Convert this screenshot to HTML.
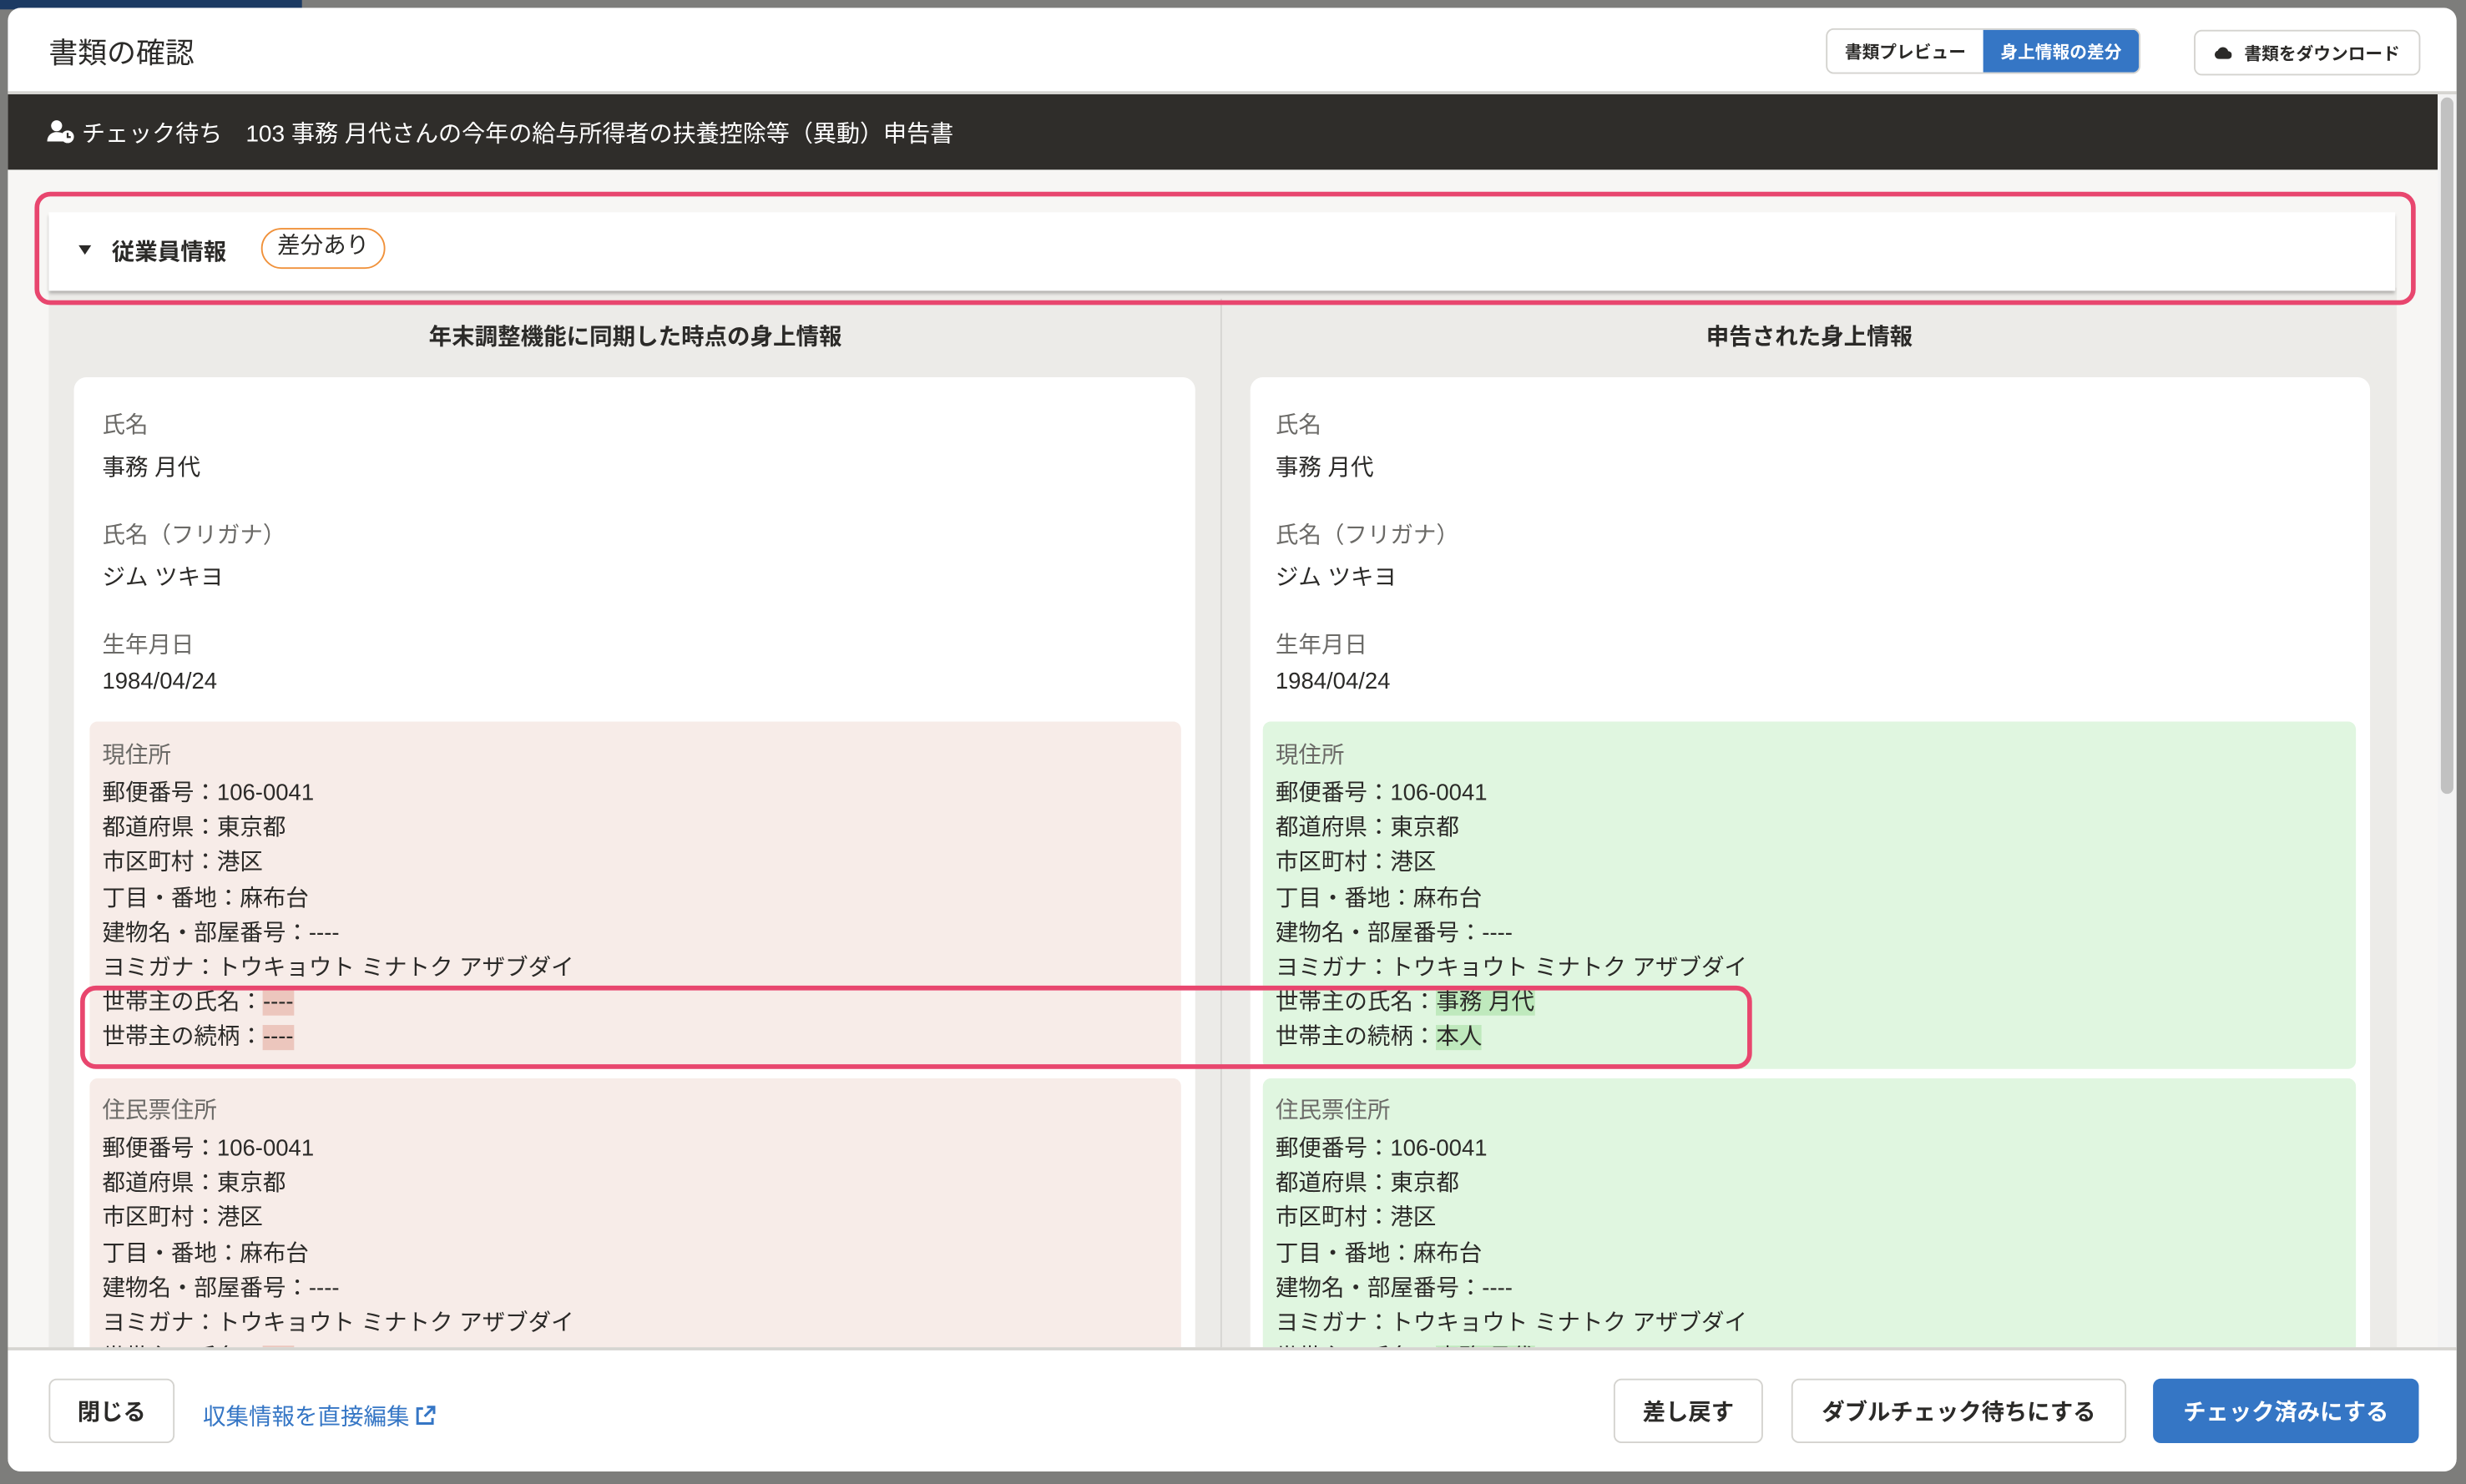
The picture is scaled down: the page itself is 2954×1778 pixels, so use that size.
<!DOCTYPE html>
<html><head><meta charset="utf-8">
<style>
*{box-sizing:border-box;margin:0;padding:0}
html,body{width:2954px;height:1778px;overflow:hidden;background:#7b7b7b}
body{font-family:"Liberation Sans","Noto Sans CJK JP",sans-serif;color:#2b2a28}
#s{position:absolute;left:0;top:0;width:1568px;height:944px;transform:scale(1.88393,1.88347);transform-origin:0 0;background:#7d7d7b;overflow:hidden}
.a{position:absolute}
.modal{left:5px;top:5px;width:1557px;height:931px;background:#fff;border-radius:8px;overflow:hidden}
.t{white-space:nowrap}
.lbl{color:#6b6a67;font-size:14.6px}
.val{font-size:14.6px;color:#2b2a28}
.btn{border:1.5px solid #d4d3cf;border-radius:5px;background:#fff;font-weight:bold;font-size:14.5px;display:flex;align-items:center;justify-content:center}
.line{position:absolute;font-size:14.6px;white-space:nowrap;line-height:22.2px}
.hp{background:#ecc6bd}
.hg{background:#bfe9bd}
</style></head><body>
<div id="s">
 <div class="a" style="left:0;top:0;width:192px;height:6px;background:#1c3a63"></div>
 <div class="modal a">
  <div class="a t" style="left:26px;top:15px;font-size:18.5px;">書類の確認</div>
  <div class="a" style="left:1156px;top:13px;width:200px;height:29px;border:1.5px solid #d4d3cf;border-radius:5px;overflow:hidden;display:flex">
    <div style="width:99px;display:flex;align-items:center;justify-content:center;font-size:11px;font-weight:bold">書類プレビュー</div>
    <div style="flex:1;background:#3576c5;color:#fff;display:flex;align-items:center;justify-content:center;font-size:11px;font-weight:bold">身上情報の差分</div>
  </div>
  <div class="a btn" style="left:1390px;top:14px;width:144px;height:29px;font-size:11px;"><svg width="11" height="9" viewBox="0 0 11 9" style="margin-right:8px"><path d="M3 8.5h5.5a2.5 2.5 0 0 0 .3-5A3.5 3.5 0 0 0 2.2 3.2 2.7 2.7 0 0 0 3 8.5z" fill="#2b2a28"/></svg>書類をダウンロード</div>
  <div class="a" style="left:0;top:53px;width:1557px;height:2px;background:#d6d5d1"></div>
  <div class="a" style="left:0;top:55px;width:1545px;height:48px;background:#2f2d2a"></div>
  <svg class="a" style="left:25px;top:71px" width="18" height="16" viewBox="0 0 18 16"><circle cx="6" cy="4" r="3.5" fill="#fff"/><path d="M0 14c0-4 3-6 6-6s5 1 6 3v3z" fill="#fff"/><circle cx="13" cy="11" r="4" fill="#fff"/><path d="M13 8.5v2.7h2" stroke="#2f2d2a" stroke-width="1.2" fill="none"/></svg>
  <div class="a t" style="left:47px;top:69px;color:#fff;font-size:14.9px">チェック待ち　103 事務 月代さんの今年の給与所得者の扶養控除等（異動）申告書</div>
  <div class="a" style="left:0;top:103px;width:1545px;height:750px;background:#f7f6f4"></div>
  <div class="a" style="left:1545px;top:55px;width:12px;height:798px;background:#f3f3f3"></div>
  <div class="a" style="left:1547px;top:57px;width:8px;height:443px;background:#c1c1c1;border-radius:4px"></div>
  <div class="a" style="left:26px;top:178px;width:1493px;height:680px;background:#ecebe8"></div>
  <div class="a" style="left:771px;top:185px;width:1px;height:670px;background:#d6d5d1"></div>
  <div class="a t" style="left:26px;top:198px;width:746px;text-align:center;font-weight:bold;font-size:14.6px">年末調整機能に同期した時点の身上情報</div>
  <div class="a t" style="left:772px;top:198px;width:747px;text-align:center;font-weight:bold;font-size:14.6px">申告された身上情報</div>
  <div class="a" style="left:26px;top:130px;width:1492px;height:50px;background:#fff;box-shadow:0 2px 2px rgba(0,0,0,.25)"></div>
  <div class="a" style="left:45px;top:151px;width:0;height:0;border-left:4px solid transparent;border-right:4px solid transparent;border-top:6px solid #2b2a28"></div>
  <div class="a t" style="left:66px;top:144px;font-weight:bold;font-size:14.6px">従業員情報</div>
  <div class="a t" style="left:161px;top:140px;width:79px;height:26px;border:1.5px solid #f0913a;border-radius:13px;font-size:14.6px;text-align:center;line-height:23px">差分あり</div>
  <div class="a" style="left:17px;top:117px;width:1514px;height:72px;border:3px solid #e8466e;border-radius:10px"></div>

  <div class="a" style="left:42px;top:235px;width:713px;height:700px;background:#fff;border-radius:8px"></div>
  <div class="a" style="left:790px;top:235px;width:712px;height:700px;background:#fff;border-radius:8px"></div>

  <div class="a" style="left:52px;top:454px;width:694px;height:221px;background:#f7ece8;border-radius:5px"></div>
  <div class="a" style="left:52px;top:681px;width:694px;height:200px;background:#f7ece8;border-radius:5px"></div>
  <div class="a" style="left:798px;top:454px;width:695px;height:221px;background:#e0f6e0;border-radius:5px"></div>
  <div class="a" style="left:798px;top:681px;width:695px;height:200px;background:#e0f6e0;border-radius:5px"></div>

  <div class="a lbl t" style="left:60px;top:254px">氏名</div>
  <div class="a val t" style="left:60px;top:281px">事務 月代</div>
  <div class="a lbl t" style="left:60px;top:324px">氏名（フリガナ）</div>
  <div class="a val t" style="left:60px;top:351px">ジム ツキヨ</div>
  <div class="a lbl t" style="left:60px;top:394px">生年月日</div>
  <div class="a val t" style="left:60px;top:421px">1984/04/24</div>
  <div class="a lbl t" style="left:60px;top:464px">現住所</div>
  <div class="line" style="left:60px;top:489px">郵便番号：106-0041<br>都道府県：東京都<br>市区町村：港区<br>丁目・番地：麻布台<br>建物名・部屋番号：----<br>ヨミガナ：トウキョウト ミナトク アザブダイ<br>世帯主の氏名：<span class="hp">----</span><br>世帯主の続柄：<span class="hp">----</span></div>
  <div class="a lbl t" style="left:60px;top:690px">住民票住所</div>
  <div class="line" style="left:60px;top:715px">郵便番号：106-0041<br>都道府県：東京都<br>市区町村：港区<br>丁目・番地：麻布台<br>建物名・部屋番号：----<br>ヨミガナ：トウキョウト ミナトク アザブダイ<br>世帯主の氏名：<span class="hp">----</span></div>

  <div class="a lbl t" style="left:806px;top:254px">氏名</div>
  <div class="a val t" style="left:806px;top:281px">事務 月代</div>
  <div class="a lbl t" style="left:806px;top:324px">氏名（フリガナ）</div>
  <div class="a val t" style="left:806px;top:351px">ジム ツキヨ</div>
  <div class="a lbl t" style="left:806px;top:394px">生年月日</div>
  <div class="a val t" style="left:806px;top:421px">1984/04/24</div>
  <div class="a lbl t" style="left:806px;top:464px">現住所</div>
  <div class="line" style="left:806px;top:489px">郵便番号：106-0041<br>都道府県：東京都<br>市区町村：港区<br>丁目・番地：麻布台<br>建物名・部屋番号：----<br>ヨミガナ：トウキョウト ミナトク アザブダイ<br>世帯主の氏名：<span class="hg">事務 月代</span><br>世帯主の続柄：<span class="hg">本人</span></div>
  <div class="a lbl t" style="left:806px;top:690px">住民票住所</div>
  <div class="line" style="left:806px;top:715px">郵便番号：106-0041<br>都道府県：東京都<br>市区町村：港区<br>丁目・番地：麻布台<br>建物名・部屋番号：----<br>ヨミガナ：トウキョウト ミナトク アザブダイ<br>世帯主の氏名：<span class="hg">事務 月代</span></div>

  <div class="a" style="left:46px;top:622px;width:1063px;height:53px;border:3px solid #e8466e;border-radius:10px"></div>

  <div class="a" style="left:0;top:852px;width:1557px;height:80px;background:#fff;border-top:2px solid #d6d5d1"></div>
  <div class="a btn" style="left:26px;top:872px;width:80px;height:41px">閉じる</div>
  <div class="a t" style="left:124px;top:885px;color:#3576c5;font-size:14.6px">収集情報を直接編集 <svg width="13" height="13" viewBox="0 0 13 13" style="vertical-align:-1px"><path d="M5 2H1.5v9.5H11V8" stroke="#3576c5" stroke-width="1.6" fill="none"/><path d="M7.5 1H12v4.5M12 1L6 7" stroke="#3576c5" stroke-width="1.6" fill="none"/></svg></div>
  <div class="a btn" style="left:1021px;top:872px;width:95px;height:41px">差し戻す</div>
  <div class="a btn" style="left:1134px;top:872px;width:213px;height:41px">ダブルチェック待ちにする</div>
  <div class="a btn" style="left:1364px;top:872px;width:169px;height:41px;background:#3576c5;border-color:#3576c5;color:#fff">チェック済みにする</div>
 </div>
</div>
</body></html>
